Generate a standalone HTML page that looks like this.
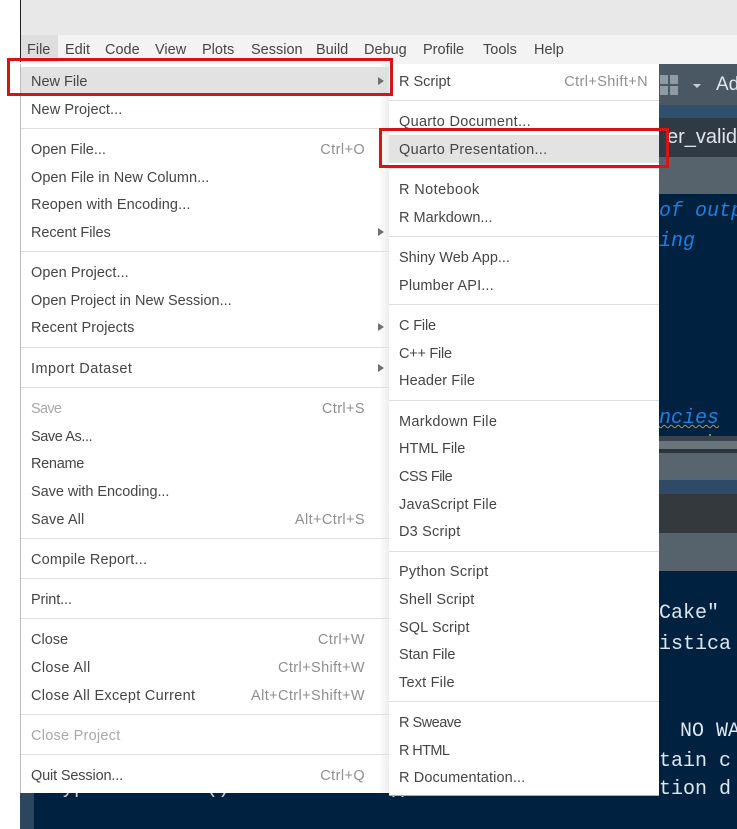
<!DOCTYPE html>
<html><head><meta charset="utf-8">
<style>
html,body{margin:0;padding:0;width:737px;height:829px;overflow:hidden;background:#fff}
#r{position:relative;width:737px;height:829px;overflow:hidden;font-family:"Liberation Sans",sans-serif;font-size:14.5px;color:#454545}
.b{position:absolute}
.i{position:absolute;height:28px;line-height:30px;white-space:nowrap}
.s{position:absolute;height:28px;line-height:30px;white-space:nowrap;text-align:right;color:#8f8f8f;letter-spacing:.4px}
.d{color:#a8a8a8}
.l{position:absolute;height:1px;background:#dedede}
.m{position:absolute;top:35px;height:29px;line-height:31px;white-space:nowrap}
.a{position:absolute;width:0;height:0;border-left:6px solid #707070;border-top:4px solid transparent;border-bottom:4px solid transparent}
.c{position:absolute;font-family:"Liberation Mono",monospace;font-size:20px;white-space:nowrap;color:#dfe6ec;line-height:28px}
.q{color:#1f7fe0;font-style:italic}
.rb{position:absolute;border:3px solid #d81313;box-sizing:border-box}
</style></head><body><div id="r">
<div class="b" style="left:20px;top:0;width:717px;height:35px;background:#e8e8e8"></div>
<div class="b" style="left:20px;top:0;width:1px;height:62px;background:#222"></div>
<div class="b" style="left:21px;top:35px;width:716px;height:29px;background:#f3f3f3"></div>
<div class="b" style="left:21px;top:35px;width:37px;height:27px;background:#dedede"></div>
<div class="m" style="left:27px">File</div>
<div class="m" style="left:65px">Edit</div>
<div class="m" style="left:105px">Code</div>
<div class="m" style="left:155px">View</div>
<div class="m" style="left:202px">Plots</div>
<div class="m" style="left:251px">Session</div>
<div class="m" style="left:316px">Build</div>
<div class="m" style="left:364px">Debug</div>
<div class="m" style="left:423px">Profile</div>
<div class="m" style="left:483px">Tools</div>
<div class="m" style="left:534px">Help</div>

<!-- backdrop -->
<div class="b" style="left:20px;top:64px;width:717px;height:765px;background:#002240"></div>
<div class="b" style="left:20px;top:790px;width:14px;height:39px;background:#2c4660"></div>
<div class="b" style="left:659px;top:64px;width:78px;height:41px;background:#4a5863"></div>
<div class="b" style="left:659px;top:105px;width:78px;height:13px;background:#2e4f6d"></div>
<div class="b" style="left:659px;top:118px;width:78px;height:39px;background:#2f3a44"></div>
<div class="b" style="left:659px;top:157px;width:78px;height:37px;background:#56636d"></div>
<div class="b" style="left:659px;top:436px;width:78px;height:5px;background:#3a444c"></div>
<div class="b" style="left:659px;top:441px;width:78px;height:8px;background:#6a747c"></div>
<div class="b" style="left:659px;top:449px;width:78px;height:4px;background:#2d3339"></div>
<div class="b" style="left:659px;top:453px;width:78px;height:27px;background:#59656e"></div>
<div class="b" style="left:659px;top:480px;width:78px;height:14px;background:#2f4a66"></div>
<div class="b" style="left:659px;top:494px;width:78px;height:39px;background:#34393e"></div>
<div class="b" style="left:659px;top:533px;width:78px;height:38px;background:#56636d"></div>
<div class="b" style="left:660px;top:75px;width:8px;height:9px;background:#8f9aa3"></div>
<div class="b" style="left:670px;top:75px;width:8px;height:9px;background:#8f9aa3"></div>
<div class="b" style="left:660px;top:86px;width:8px;height:9px;background:#8f9aa3"></div>
<div class="b" style="left:670px;top:86px;width:8px;height:9px;background:#8f9aa3"></div>
<div class="b" style="left:693px;top:84px;border-top:4px solid #c9d0d5;border-left:4px solid transparent;border-right:4px solid transparent"></div>
<div class="c" style="left:716px;top:71px;font-family:'Liberation Sans',sans-serif;font-size:19px">Ad</div>
<div class="c" style="left:667px;top:123px;font-family:'Liberation Sans',sans-serif;font-size:20px">er_valid</div>
<div class="c q" style="left:659px;top:198px">of outp</div>
<div class="c q" style="left:659px;top:228px">ing</div>
<div class="c q" style="left:659px;top:405px;text-decoration:underline wavy #a89a55 1px">ncies</div>
<div class="b" style="left:709px;top:434px;width:2px;height:2px;background:#3fae5a"></div>
<div class="c" style="left:659px;top:600px">Cake"</div>
<div class="c" style="left:659px;top:631px">istica</div>
<div class="c" style="left:680px;top:718px">NO WA</div>
<div class="c" style="left:659px;top:748px">tain c</div>
<div class="c" style="left:659px;top:776px">tion d</div>
<div class="c" style="left:50px;top:775px;color:#c9d3dc">Type 'license()' or 'licence()' for</div>

<!-- left menu -->
<div class="b" style="left:20px;top:64px;width:369px;height:729px;background:#fff;border-left:1px solid #bbb;box-sizing:border-box"></div>
<div class="b" style="left:21px;top:67px;width:368px;height:28px;background:#e2e2e2"></div>
<div class="b" style="left:379px;top:64px;width:10px;height:729px;background:linear-gradient(90deg,#fff,#ececec)"></div>
<div class="b" style="left:379px;top:67px;width:10px;height:28px;background:#e0e0e0"></div>

<div class="i" style="left:31px;top:67px">New File</div>
<div class="i" style="left:31px;top:95px;letter-spacing:.08px">New Project...</div>
<div class="i" style="left:31px;top:135px">Open File...</div>
<div class="i" style="left:31px;top:163px;letter-spacing:.04px">Open File in New Column...</div>
<div class="i" style="left:31px;top:190px;letter-spacing:.1px">Reopen with Encoding...</div>
<div class="i" style="left:31px;top:218px;letter-spacing:-.08px">Recent Files</div>
<div class="i" style="left:31px;top:258px;letter-spacing:.07px">Open Project...</div>
<div class="i" style="left:31px;top:286px">Open Project in New Session...</div>
<div class="i" style="left:31px;top:313px;letter-spacing:.07px">Recent Projects</div>
<div class="i" style="left:31px;top:354px;letter-spacing:.45px">Import Dataset</div>
<div class="i d" style="left:31px;top:394px;letter-spacing:-.7px">Save</div>
<div class="i" style="left:31px;top:422px;letter-spacing:-.4px">Save As...</div>
<div class="i" style="left:31px;top:449px;letter-spacing:-.3px">Rename</div>
<div class="i" style="left:31px;top:477px;letter-spacing:-.05px">Save with Encoding...</div>
<div class="i" style="left:31px;top:505px;letter-spacing:.12px">Save All</div>
<div class="i" style="left:31px;top:545px;letter-spacing:.2px">Compile Report...</div>
<div class="i" style="left:31px;top:585px;letter-spacing:-.14px">Print...</div>
<div class="i" style="left:31px;top:625px">Close</div>
<div class="i" style="left:31px;top:653px;letter-spacing:.35px">Close All</div>
<div class="i" style="left:31px;top:681px;letter-spacing:.3px">Close All Except Current</div>
<div class="i d" style="left:31px;top:721px;letter-spacing:.25px">Close Project</div>
<div class="i" style="left:31px;top:761px;letter-spacing:-.15px">Quit Session...</div>

<div class="s" style="right:372px;top:135px">Ctrl+O</div>
<div class="s" style="right:372px;top:394px">Ctrl+S</div>
<div class="s" style="right:372px;top:505px">Alt+Ctrl+S</div>
<div class="s" style="right:372px;top:625px">Ctrl+W</div>
<div class="s" style="right:372px;top:653px">Ctrl+Shift+W</div>
<div class="s" style="right:372px;top:681px">Alt+Ctrl+Shift+W</div>
<div class="s" style="right:372px;top:761px">Ctrl+Q</div>

<div class="a" style="left:378px;top:77px"></div>
<div class="a" style="left:378px;top:228px"></div>
<div class="a" style="left:378px;top:323px"></div>
<div class="a" style="left:378px;top:364px"></div>

<div class="l" style="left:21px;width:368px;top:128px"></div>
<div class="l" style="left:21px;width:368px;top:251px"></div>
<div class="l" style="left:21px;width:368px;top:347px"></div>
<div class="l" style="left:21px;width:368px;top:387px"></div>
<div class="l" style="left:21px;width:368px;top:538px"></div>
<div class="l" style="left:21px;width:368px;top:578px"></div>
<div class="l" style="left:21px;width:368px;top:618px"></div>
<div class="l" style="left:21px;width:368px;top:714px"></div>
<div class="l" style="left:21px;width:368px;top:754px"></div>

<!-- right menu -->
<div class="b" style="left:389px;top:64px;width:270px;height:732px;background:#fff;border-bottom:1px solid #aaa;box-sizing:border-box"></div>
<div class="b" style="left:389px;top:135px;width:270px;height:28px;background:#e3e3e3"></div>

<div class="i" style="left:399px;top:67px">R Script</div>
<div class="i" style="left:399px;top:107px;letter-spacing:.3px">Quarto Document...</div>
<div class="i" style="left:399px;top:135px;letter-spacing:.3px">Quarto Presentation...</div>
<div class="i" style="left:399px;top:175px;letter-spacing:.4px">R Notebook</div>
<div class="i" style="left:399px;top:203px">R Markdown...</div>
<div class="i" style="left:399px;top:243px">Shiny Web App...</div>
<div class="i" style="left:399px;top:271px;letter-spacing:.15px">Plumber API...</div>
<div class="i" style="left:399px;top:311px;letter-spacing:-.15px">C File</div>
<div class="i" style="left:399px;top:339px;letter-spacing:-.25px">C++ File</div>
<div class="i" style="left:399px;top:366px;letter-spacing:.1px">Header File</div>
<div class="i" style="left:399px;top:407px;letter-spacing:.3px">Markdown File</div>
<div class="i" style="left:399px;top:434px">HTML File</div>
<div class="i" style="left:399px;top:462px;letter-spacing:-.5px">CSS File</div>
<div class="i" style="left:399px;top:490px;letter-spacing:.2px">JavaScript File</div>
<div class="i" style="left:399px;top:517px;letter-spacing:.2px">D3 Script</div>
<div class="i" style="left:399px;top:557px;letter-spacing:.25px">Python Script</div>
<div class="i" style="left:399px;top:585px;letter-spacing:.18px">Shell Script</div>
<div class="i" style="left:399px;top:613px;letter-spacing:.1px">SQL Script</div>
<div class="i" style="left:399px;top:640px;letter-spacing:-.1px">Stan File</div>
<div class="i" style="left:399px;top:668px;letter-spacing:.2px">Text File</div>
<div class="i" style="left:399px;top:708px;letter-spacing:-.5px">R Sweave</div>
<div class="i" style="left:399px;top:736px;letter-spacing:-.6px">R HTML</div>
<div class="i" style="left:399px;top:763px;letter-spacing:.12px">R Documentation...</div>
<div class="s" style="right:89px;top:67px">Ctrl+Shift+N</div>

<div class="l" style="left:389px;width:270px;top:100px"></div>
<div class="l" style="left:389px;width:270px;top:168px"></div>
<div class="l" style="left:389px;width:270px;top:236px"></div>
<div class="l" style="left:389px;width:270px;top:304px"></div>
<div class="l" style="left:389px;width:270px;top:400px"></div>
<div class="l" style="left:389px;width:270px;top:551px"></div>
<div class="l" style="left:389px;width:270px;top:701px"></div>

<!-- red boxes -->
<div class="rb" style="left:7px;top:58px;width:386px;height:38px"></div>
<div class="rb" style="left:379px;top:128px;width:290px;height:40px"></div>
</div></body></html>
